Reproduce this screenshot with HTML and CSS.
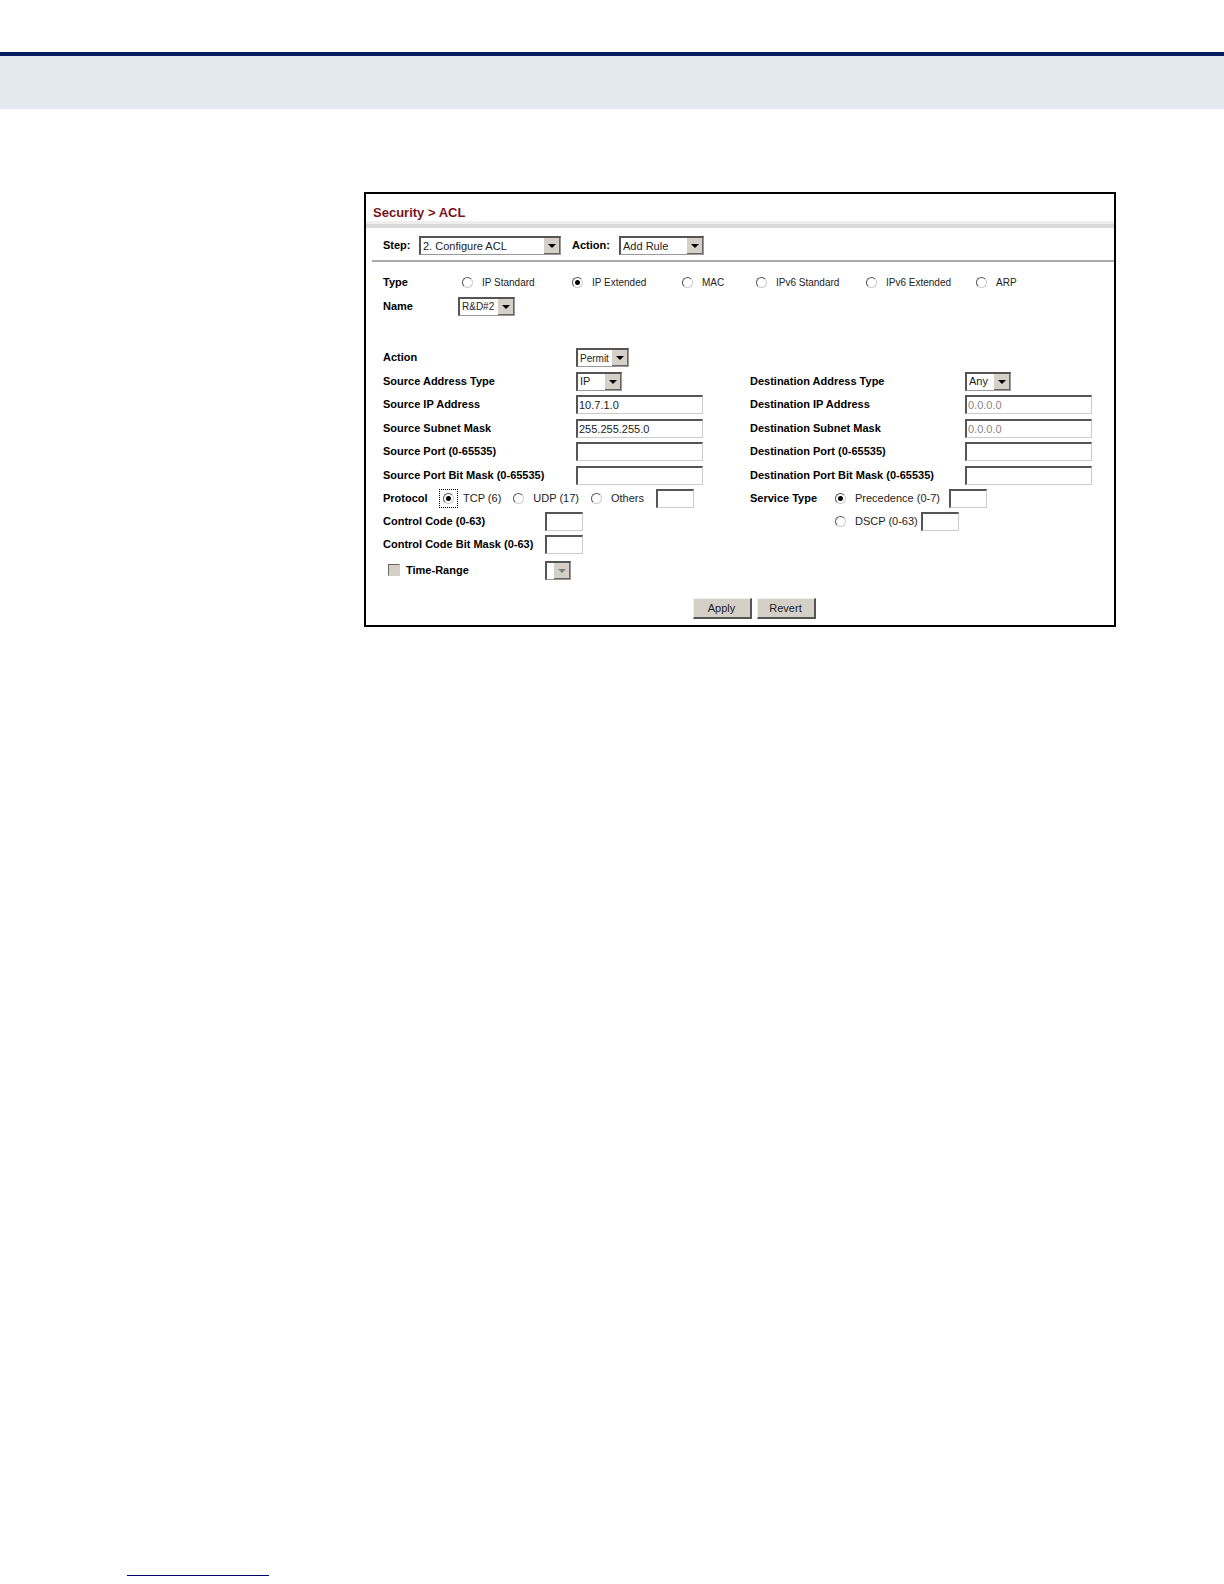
FILE: index.html
```html
<!DOCTYPE html>
<html lang="en">

<head>
    <meta charset="utf-8">
    <title>Security &gt; ACL</title>
    <link rel="stylesheet" href="styles.css">
</head>

<body>
    <header class="page-band"></header>

    <main class="panel">
        <h1 class="panel-title">Security &gt; ACL</h1>

        <form class="acl-form">
            <div class="step-bar">
                <label class="step-label" for="step">Step:</label>
                <select class="select-step" id="step">
                    <option>2. Configure ACL</option>
                </select>
                <label class="action-label" for="step-action">Action:</label>
                <select class="select-action" id="step-action">
                    <option>Add Rule</option>
                </select>
            </div>

            <div class="type-row">
                <span class="name">Type</span>
                <label class="option"><input type="radio" name="type">IP Standard</label>
                <label class="option"><input type="radio" name="type" checked>IP Extended</label>
                <label class="option"><input type="radio" name="type">MAC</label>
                <label class="option"><input type="radio" name="type">IPv6 Standard</label>
                <label class="option"><input type="radio" name="type">IPv6 Extended</label>
                <label class="option"><input type="radio" name="type">ARP</label>
            </div>
            <div class="name-row">
                <label class="name" for="acl-name">Name</label>
                <select class="select-name" id="acl-name">
                    <option>R&amp;D#2</option>
                </select>
            </div>

            <!-- source fields on the left, destination fields on the right -->
            <div class="address-grid">
                <label class="name" for="rule-action">Action</label>
                <select class="select-permit" id="rule-action">
                    <option>Permit</option>
                </select>

                <label class="name source" for="src-type">Source Address Type</label>
                <select class="select-type" id="src-type">
                    <option>IP</option>
                </select>
                <label class="name" for="dst-type">Destination Address Type</label>
                <select class="select-type" id="dst-type">
                    <option>Any</option>
                </select>

                <label class="name source" for="src-ip">Source IP Address</label>
                <input class="text" type="text" id="src-ip" value="10.7.1.0">
                <label class="name" for="dst-ip">Destination IP Address</label>
                <input class="text" type="text" id="dst-ip" value="0.0.0.0" disabled>

                <label class="name source" for="src-mask">Source Subnet Mask</label>
                <input class="text" type="text" id="src-mask" value="255.255.255.0">
                <label class="name" for="dst-mask">Destination Subnet Mask</label>
                <input class="text" type="text" id="dst-mask" value="0.0.0.0" disabled>

                <label class="name source" for="src-port">Source Port (0-65535)</label>
                <input class="text" type="text" id="src-port">
                <label class="name" for="dst-port">Destination Port (0-65535)</label>
                <input class="text" type="text" id="dst-port">

                <label class="name source" for="src-port-mask">Source Port Bit Mask (0-65535)</label>
                <input class="text" type="text" id="src-port-mask">
                <label class="name" for="dst-port-mask">Destination Port Bit Mask (0-65535)</label>
                <input class="text" type="text" id="dst-port-mask">
            </div>

            <div class="details">
                <div class="details-left">
                    <div class="protocol-row">
                        <span class="name">Protocol</span>
                        <label class="option focused"><span class="focus-box"><input type="radio" name="protocol" checked></span>TCP (6)</label>
                        <label class="option"><input type="radio" name="protocol">UDP (17)</label>
                        <label class="option"><input type="radio" name="protocol">Others</label>
                        <input class="text short" type="text" aria-label="Other protocol number">
                    </div>
                    <div class="code-row">
                        <label class="name" for="control-code">Control Code (0-63)</label>
                        <input class="text short" type="text" id="control-code">
                    </div>
                    <div class="code-row">
                        <label class="name" for="control-mask">Control Code Bit Mask (0-63)</label>
                        <input class="text short" type="text" id="control-mask">
                    </div>
                    <div class="code-row range-row">
                        <label class="name range"><input type="checkbox" disabled>Time-Range</label>
                        <select class="select-range" aria-label="Time range" disabled>
                            <option></option>
                        </select>
                    </div>
                </div>
                <div class="details-right">
                    <span class="name">Service Type</span>
                    <div class="service">
                        <div class="service-row precedence">
                            <label class="option"><input type="radio" name="service" checked>Precedence (0-7)</label>
                            <input class="text short" type="text" aria-label="Precedence">
                        </div>
                        <div class="service-row">
                            <label class="option"><input type="radio" name="service">DSCP (0-63)</label>
                            <input class="text short" type="text" aria-label="DSCP">
                        </div>
                    </div>
                </div>
            </div>

            <div class="buttons">
                <button type="button">Apply</button>
                <button type="button">Revert</button>
            </div>
        </form>
    </main>

    <footer class="page-footer">
        <hr class="footer-rule">
    </footer>
</body>

</html>
```

FILE: styles.css
```css
* {
    box-sizing: border-box;
}

body {
    display: flex;
    flex-direction: column;
    min-height: 100vh;
    margin: 0;
    background: #fff;
    color: #000;
    font-family: "Liberation Sans", Arial, sans-serif;
    font-size: 11px;
    line-height: 15px;
}

.page-band {
    height: 57px;
    margin-top: 52px;
    border-top: 4px solid #06205f;
    background: #e4e8ef;
}

.panel {
    margin: 83px 108px 0 364px;
    border: 2px solid #000;
}

.panel-title {
    margin: 0;
    padding: 10px 7px 3px;
    border-bottom: 4px solid #dadada;
    background: linear-gradient(#fff 90%, #eee 90%);
    color: #7a1420;
    font-size: 13px;
    line-height: 17px;
}

.acl-form {
    padding: 0 0 6px 17px;
}

/* form controls */

select,
.text {
    height: 19px;
    margin: 0;
    border: 1px solid #ccc;
    border-top: 2px solid #555;
    border-left: 2px solid #555;
    border-radius: 0;
    background-color: #fff;
    color: #222;
    font: inherit;
}

select {
    appearance: none;
    padding: 0 0 0 2px;
    border-color: #555 #999 #999 #555;
    background-image: url("data:image/svg+xml,%3Csvg xmlns='http://www.w3.org/2000/svg' width='16' height='16'%3E%3Cpath fill='%23d4d0c8' d='M0 0h16v16H0z'/%3E%3Cpath fill='%23666' d='M15 0h1v16H0v-1h15z'/%3E%3Cpath d='M4 6h8l-4 4z'/%3E%3C/svg%3E");
    background-repeat: no-repeat;
    background-position: right center;
}

select:disabled {
    background-image: url("data:image/svg+xml,%3Csvg xmlns='http://www.w3.org/2000/svg' width='16' height='16'%3E%3Cpath fill='%23d4d0c8' d='M0 0h16v16H0z'/%3E%3Cpath fill='%23666' d='M15 0h1v16H0v-1h15z'/%3E%3Cpath fill='%23808080' d='M4 6h8l-4 4z'/%3E%3C/svg%3E");
    opacity: 1;
}

.text {
    width: 127px;
    padding: 0 1px;
}

.text:disabled {
    color: #888;
}

.short {
    width: 38px;
}

.select-step {
    width: 142px;
}

.select-action {
    width: 85px;
}

.select-name {
    width: 57px;
}

.select-permit {
    width: 53px;
}

.select-type {
    width: 46px;
}

.select-range {
    width: 26px;
}

.select-name,
.select-permit {
    font-size: 10px;
}

input[type="radio"] {
    appearance: none;
    width: 11px;
    height: 11px;
    margin: 0;
    border: 1px solid;
    border-color: #555 #ccc #ccc #555;
    border-radius: 50%;
    background: #fff;
}

input[type="radio"]:checked {
    background: radial-gradient(circle, #000 2px, #fff 3px);
}

input[type="checkbox"] {
    appearance: none;
    width: 12px;
    height: 12px;
    margin: 0;
    border: 1px solid;
    border-color: #666 #d4d0c8 #d4d0c8 #666;
    background: #d4d0c8;
}

.name {
    font-weight: bold;
}

.option {
    display: flex;
    align-items: center;
    gap: 9px;
    color: #222;
    white-space: nowrap;
}

/* rows */

.step-bar {
    display: flex;
    align-items: center;
    height: 34px;
    margin-left: -11px;
    padding: 3px 0 0 11px;
    border-bottom: 2px solid #aaa;
    font-weight: bold;
}

.step-bar select {
    font-weight: normal;
}

.step-label {
    width: 36px;
}

.action-label {
    width: 58px;
    padding-left: 11px;
}

.type-row {
    display: grid;
    grid-template-columns: 79px 110px 110px 74px 110px 110px auto;
    align-items: center;
    height: 24px;
    margin-top: 8px;
}

.type-row .option {
    font-size: 10px;
}

.name-row {
    display: grid;
    grid-template-columns: 75px auto;
    align-items: center;
    justify-content: start;
    height: 24px;
}

.address-grid {
    display: grid;
    grid-template-columns: 193px 174px 215px auto;
    grid-template-rows: repeat(3, 23px 24px);
    align-items: center;
    justify-content: start;
    margin-top: 28px;
}

.source {
    grid-column: 1;
}

.details {
    display: grid;
    grid-template-columns: 367px auto;
    justify-content: start;
}

.protocol-row,
.code-row,
.service-row {
    display: flex;
    align-items: center;
    height: 23px;
}

.protocol-row .name {
    width: 56px;
}

.protocol-row .option {
    margin-right: 12px;
}

.protocol-row .focused {
    gap: 5px;
}

.focus-box {
    display: grid;
    place-items: center;
    width: 19px;
    height: 19px;
    border: 1px dotted #000;
}

.code-row .name {
    width: 162px;
}

.range-row {
    height: 24px;
    margin-top: 2px;
}

.range {
    display: flex;
    align-items: center;
    gap: 6px;
    padding-left: 5px;
}

.details-right {
    display: flex;
    align-items: flex-start;
    line-height: 23px;
}

.details-right .name {
    width: 85px;
}

.service-row {
    gap: 3px;
}

.precedence {
    gap: 9px;
}

.buttons {
    display: flex;
    justify-content: center;
    gap: 5px;
    margin-top: 16px;
    padding-left: 11px;
}

button {
    width: 59px;
    height: 21px;
    padding: 0;
    border: 1px solid #eee;
    border-right: 2px solid #555;
    border-bottom: 2px solid #555;
    background: #d4d0c8;
    color: #222;
    font: inherit;
}

.page-footer {
    margin-top: auto;
    padding: 0 0 8px 127px;
}

.footer-rule {
    width: 142px;
    margin: 0;
    border: 0;
    border-top: 1px solid #00007f;
}
```
